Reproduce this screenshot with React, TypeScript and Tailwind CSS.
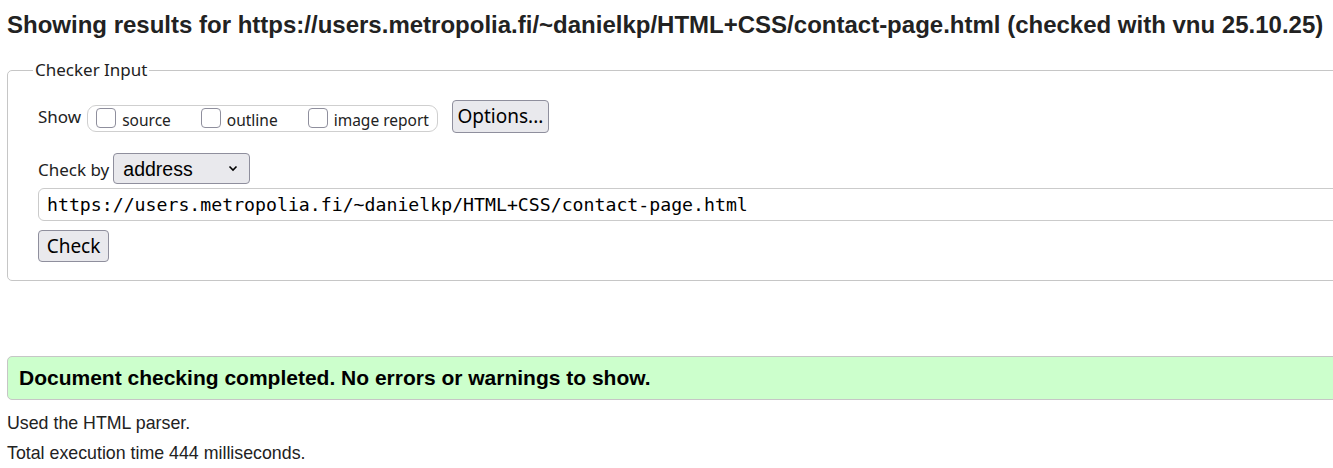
import React from "react";

const ui = "font-['Noto_Sans',sans-serif]";

function Box({ label }: { label: string }) {
  return (
    <label className="flex items-center">
      <input
        type="checkbox"
        className="appearance-none w-[20px] h-[20px] bg-white border border-[#8f8f9d] rounded-[4px] m-0"
      />
      <span className="ml-[6px] text-[15.5px] leading-[20px] text-[#222] mt-[4px]">{label}</span>
    </label>
  );
}

export default function App() {
  const url = "https://users.metropolia.fi/~danielkp/HTML+CSS/contact-page.html";
  return (
    <div className="w-[1333px] h-[468px] overflow-hidden bg-white text-[#222]">
      <div className="w-[1500px] pl-[7px]">
        <h2 className="pt-[11px] text-[24px] leading-[28px] font-bold font-['Liberation_Sans',Arial,sans-serif] whitespace-nowrap">
          Showing results for {url} (checked with vnu 25.10.25)
        </h2>

        <fieldset
          className={`${ui} mt-[19px] border border-[#c6c6c6] rounded-[5px] pl-[30px] pb-[18px] min-w-0`}
        >
          <legend className="ml-[-5px] px-[2px] text-[17px] leading-[24px] text-[#222]">Checker Input</legend>

          <div className="flex items-center mt-[18px] h-[33px]">
            <span className="text-[17px] text-[#222] mr-[6px]">Show</span>
            <div className="flex items-center h-[27px] border border-[#cfcfcf] rounded-[9px] pl-[8px] pr-[8px] gap-[30px] mt-[3px]">
              <Box label="source" />
              <Box label="outline" />
              <Box label="image report" />
            </div>
            <button className="ml-[14px] h-[33px] w-[97px] bg-[#e9e9ed] border border-[#8f8f9d] rounded-[4px] text-[19px] text-black">
              Options...
            </button>
          </div>

          <div className="flex items-center mt-[20px] h-[31px]">
            <span className="text-[17px] text-[#222] mr-[4px] mt-[2px]">Check by</span>
            <div className="flex items-center justify-between w-[137px] h-[31px] bg-[#e9e9ed] border border-[#8f8f9d] rounded-[4px] pl-[9px] pr-[10px]">
              <span className="font-['Liberation_Sans',Arial,sans-serif] text-[19.5px] text-black mt-[2px]">address</span>
              <svg width="10" height="7" viewBox="0 0 10 7" className="mr-[1px]">
                <path d="M1.5 1.5 L5 5 L8.5 1.5" fill="none" stroke="#000" strokeWidth="1.6" />
              </svg>
            </div>
          </div>

          <div className="mt-[4px] h-[33px] border border-[#cbcbcb] rounded-[6px] bg-white flex items-center pl-[8px]">
            <span className="font-['DejaVu_Sans_Mono',monospace] text-[18.2px] text-black">{url}</span>
          </div>

          <button className="mt-[9px] h-[32px] w-[71px] bg-[#e9e9ed] border border-[#8f8f9d] rounded-[4px] text-[19px] text-black">
            Check
          </button>
        </fieldset>

        <div className="mt-[75px] h-[44px] bg-[#ccffcc] border border-[#c6c6c6] rounded-[5px] flex items-center pl-[11px]">
          <span className="font-['Liberation_Sans',Arial,sans-serif] font-bold text-[21px] text-black">
            Document checking completed. No errors or warnings to show.
          </span>
        </div>

        <div className="font-['Liberation_Sans',Arial,sans-serif] text-[17.8px] text-[#222]">
          <p className="mt-[12px] leading-[22px]">Used the HTML parser.</p>
          <p className="mt-[8px] leading-[22px]">Total execution time 444 milliseconds.</p>
        </div>
      </div>
    </div>
  );
}
